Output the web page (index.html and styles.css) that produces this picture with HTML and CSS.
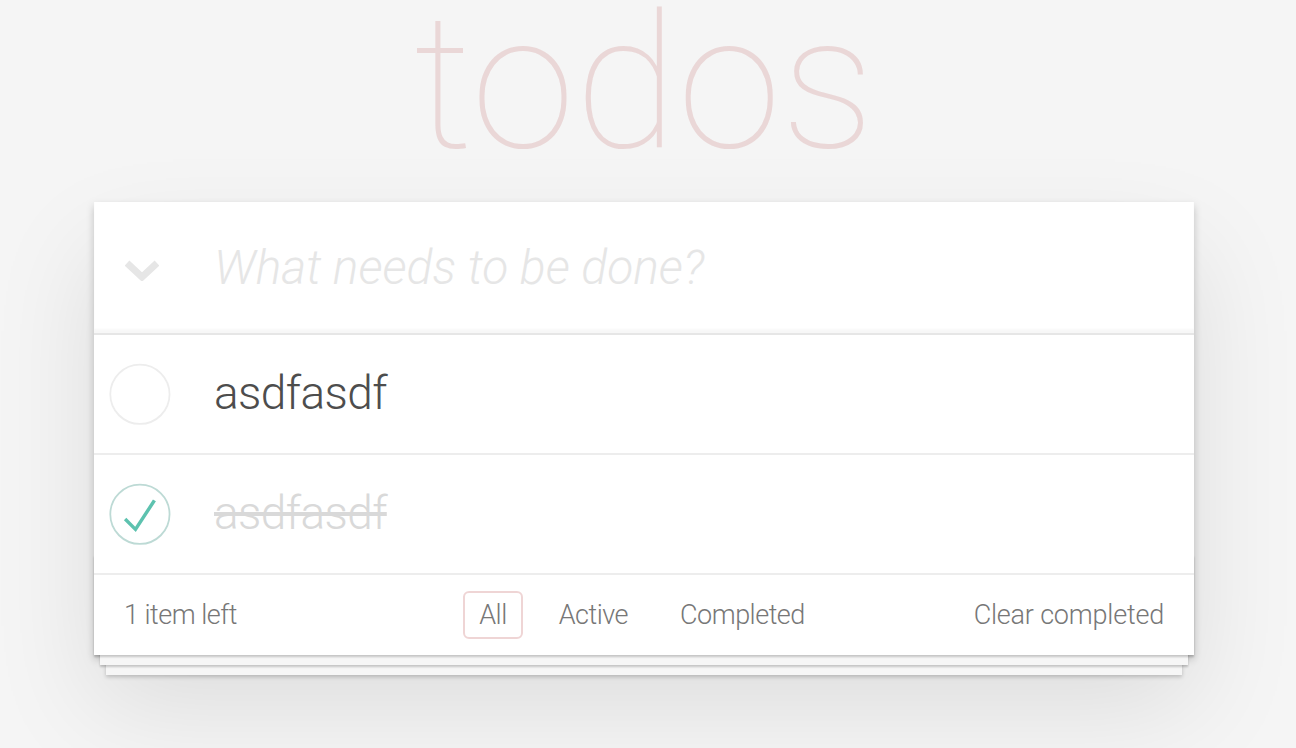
FILE: index.html
```html
<!DOCTYPE html>
<html lang="en">
<head>
<meta charset="utf-8">
<title>todos</title>
<link rel="stylesheet" href="styles.css">
</head>
<body>
<div class="page">
  <h1 class="title">todos</h1>
  <section class="todoapp">
    <header class="new-row">
      <span class="toggle-all">
        <svg width="34" height="22" viewBox="0 0 34 22"><path d="M2 4 L17 18 L32 4" fill="none" stroke="#e6e6e6" stroke-width="7"/></svg>
      </span>
      <input class="new-todo" placeholder="What needs to be done?">
    </header>
    <ul class="todo-list">
      <li class="todo">
        <span class="toggle">
          <svg width="80" height="80" viewBox="-10 -18 100 135"><circle cx="50" cy="50" r="50" fill="none" stroke="#ededed" stroke-width="3"/></svg>
        </span>
        <span class="label">asdfasdf</span>
      </li>
      <li class="todo completed">
        <span class="toggle">
          <svg width="80" height="80" viewBox="-10 -18 100 135"><circle cx="50" cy="50" r="50" fill="none" stroke="#bddad5" stroke-width="3"/><path fill="#5dc2af" d="M72 25L42 71 27 56l-4 4 20 20 34-52z"/></svg>
        </span>
        <span class="label">asdfasdf</span>
      </li>
    </ul>
    <footer class="footer">
      <span class="count">1 item left</span>
      <ul class="filters">
        <li><a class="selected">All</a></li>
        <li><a>Active</a></li>
        <li><a>Completed</a></li>
      </ul>
      <span class="clear">Clear completed</span>
    </footer>
  </section>
</div>
</body>
</html>
```
FILE: styles.css
```css
html, body {
  margin: 0;
  padding: 0;
}
body {
  background: #f5f5f5;
  font-family: Roboto, "Helvetica Neue", Arial, sans-serif;
  font-weight: 300;
  color: #4d4d4d;
  -webkit-font-smoothing: antialiased;
}
.page {
  width: 1100px;
  margin-left: 94px;
  padding-bottom: 94px;
}
.title {
  margin: 0;
  height: 202px;
  font-size: 188px;
  line-height: 166px;
  font-weight: 100;
  text-align: center;
  color: rgba(175, 47, 47, 0.15);
}
.todoapp {
  position: relative;
  background: #fff;
  box-shadow: 0 4px 8px 0 rgba(0, 0, 0, 0.2), 0 50px 100px 0 rgba(0, 0, 0, 0.1);
}
.new-row {
  display: flex;
  align-items: center;
  height: 131px;
  box-shadow: inset 0 -4px 2px rgba(0, 0, 0, 0.03);
}
.toggle-all {
  width: 120px;
  display: flex;
  padding-left: 31px;
  box-sizing: border-box;
}
.toggle-all svg {
  display: block;
  margin-top: 4px;
}
.new-todo {
  flex: 1;
  border: 0;
  outline: none;
  padding: 0;
  margin: 0;
  font-family: inherit;
  font-size: 48px;
  font-weight: 300;
  color: #4d4d4d;
  background: transparent;
}
.new-todo::placeholder {
  font-style: italic;
  font-weight: 300;
  color: #e6e6e6;
}
.todo-list {
  list-style: none;
  margin: 0;
  padding: 0;
  border-top: 2px solid #e6e6e6;
}
.todo {
  display: flex;
  align-items: center;
  height: 118px;
  border-bottom: 2px solid #ededed;
  font-size: 46px;
  letter-spacing: -0.6px;
}
.toggle {
  width: 120px;
  display: flex;
}
.toggle svg {
  display: block;
}
.label {
  color: #4d4d4d;
  line-height: 57.6px;
}
.completed .label {
  color: #d9d9d9;
  text-decoration: line-through;
}
.footer {
  position: relative;
  display: grid;
  grid-template-columns: 1fr auto 1fr;
  align-items: center;
  height: 80px;
  padding: 0 30px;
  font-size: 27px;
  letter-spacing: -0.5px;
  color: #777;
}
.footer::before {
  content: "";
  position: absolute;
  left: 0;
  right: 0;
  bottom: 0;
  height: 100px;
  overflow: hidden;
  box-shadow: 0 2px 2px rgba(0, 0, 0, 0.2), 0 16px 0 -6px #f6f6f6, 0 18px 2px -6px rgba(0, 0, 0, 0.2), 0 32px 0 -12px #f6f6f6, 0 34px 4px -12px rgba(0, 0, 0, 0.2);
}
.count {
  justify-self: start;
  position: relative;
}
.filters {
  list-style: none;
  margin: 0;
  padding: 0;
  display: flex;
  gap: 8px;
  position: relative;
  left: -2px;
}
.filters a {
  display: block;
  padding: 6px 14px;
  margin: 0 6px;
  border: 2px solid transparent;
  border-radius: 6px;
  line-height: 32px;
  color: inherit;
}
.filters a.selected {
  border-color: rgba(175, 47, 47, 0.2);
}
.clear {
  justify-self: end;
  position: relative;
  letter-spacing: -0.2px;
}
```
